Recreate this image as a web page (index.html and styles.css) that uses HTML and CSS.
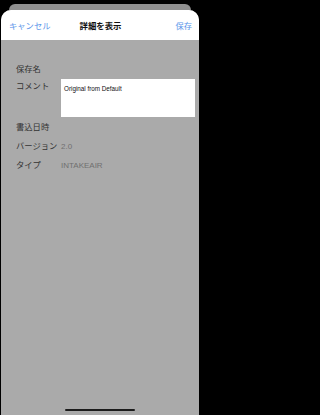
FILE: index.html
```html
<!DOCTYPE html>
<html lang="ja">
<head>
<meta charset="utf-8">
<link rel="stylesheet" href="styles.css">
</head>
<body>
<div class="back"></div>
<div class="sheet">
  <div class="header">
    <span class="nav-btn left">キャンセル</span>
    <span class="title">詳細を表示</span>
    <span class="nav-btn right">保存</span>
  </div>
  <div class="content">
    <div class="label r1">保存名</div>
    <div class="value r1"></div>
    <div class="label r2">コメント</div>
    <div class="box">Original from Default</div>
    <div class="label r3">書込日時</div>
    <div class="value r3"></div>
    <div class="label">バージョン</div>
    <div class="value">2.0</div>
    <div class="label">タイプ</div>
    <div class="value">INTAKEAIR</div>
  </div>
  <div class="home"></div>
</div>
</body>
</html>
```

FILE: styles.css
```css
html, body {
  margin: 0;
  padding: 0;
}
body {
  width: 200px;
  height: 415px;
  overflow: hidden;
  background: #000;
  font-family: "Liberation Sans", "Noto Sans CJK JP", sans-serif;
}
.back {
  margin: 4px 9px 0;
  height: 6px;
  background: #8f8f8f;
  border-radius: 8px 8px 0 0;
}
.sheet {
  position: relative;
  margin: 0 1px;
  height: 405px;
  background: #aaaaaa;
  border-radius: 10px 10px 0 0;
  overflow: hidden;
}
.header {
  height: 30px;
  background: #fff;
  display: grid;
  grid-template-columns: 1fr auto 1fr;
  align-items: center;
  padding: 0 7px 0 8px;
}
.nav-btn {
  color: #5b95ea;
  font-size: 8.3px;
}
.nav-btn.right {
  justify-self: end;
}
.title {
  color: #111;
  font-size: 8.4px;
  font-weight: 600;
}
.content {
  display: grid;
  grid-template-columns: 45px 1fr;
  padding: 20px 4px 0 15px;
  align-items: start;
}
.label {
  color: #333;
  font-size: 8.3px;
  line-height: 19px;
}
.value {
  color: #707070;
  font-size: 8px;
  line-height: 19px;
  min-height: 19px;
}
.label.r1, .value.r1 {
  line-height: 18px;
  min-height: 18px;
}
.label.r2 {
  line-height: 16px;
}
.box {
  margin-top: 1px;
  height: 38px;
  background: #fff;
  color: #111;
  font-size: 6.3px;
  padding: 6px 3px 0;
  box-sizing: border-box;
}
.label.r3, .value.r3 {
  margin-top: 1px;
}
.home {
  position: absolute;
  left: 64px;
  bottom: 4px;
  width: 70px;
  height: 2.5px;
  border-radius: 2px;
  background: #1c1c1c;
}
```
